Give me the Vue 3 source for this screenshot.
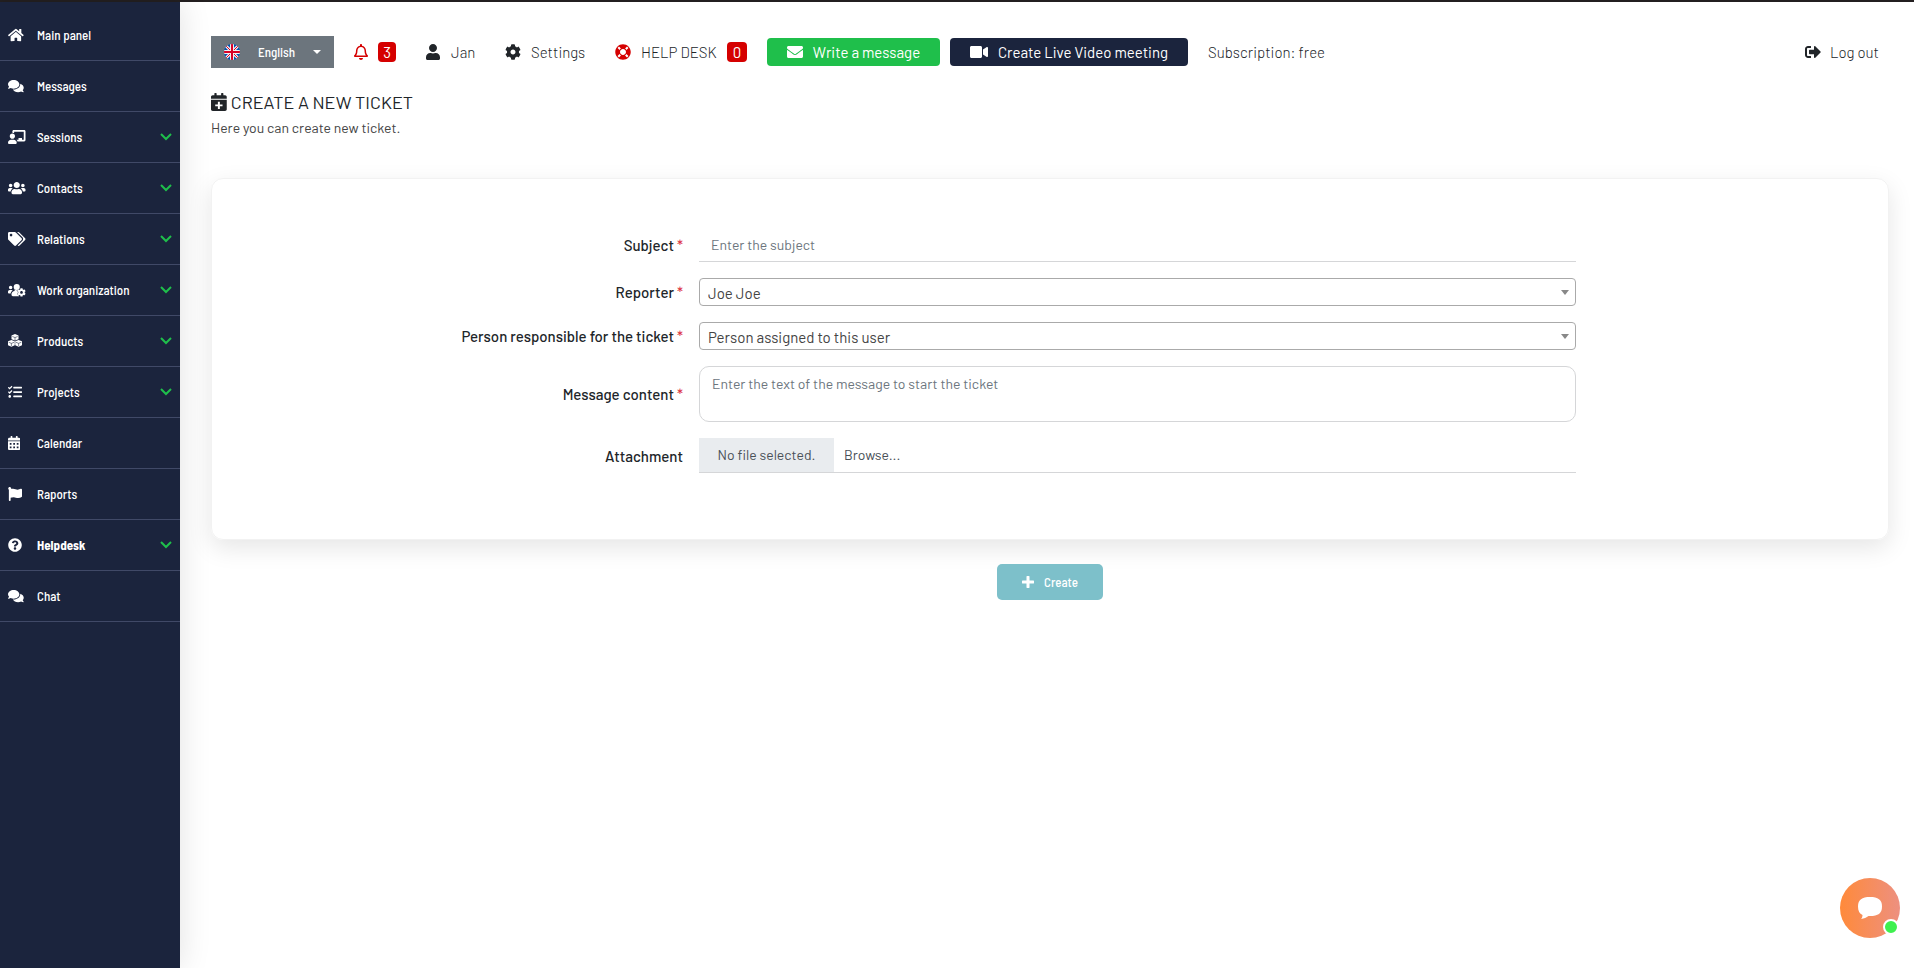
<script setup>
import { ref } from 'vue'

const icons = {
  home: { w: 576, d: 'M280.37 148.26L96 300.11V464a16 16 0 0 0 16 16l112.06-.29a16 16 0 0 0 15.92-16V368a16 16 0 0 1 16-16h64a16 16 0 0 1 16 16v95.64a16 16 0 0 0 16 16.05L464 480a16 16 0 0 0 16-16V300L295.67 148.26a12.19 12.19 0 0 0-15.3 0zM571.6 251.47L488 182.56V44.05a12 12 0 0 0-12-12h-56a12 12 0 0 0-12 12v72.61L318.47 43a48 48 0 0 0-61 0L4.34 251.47a12 12 0 0 0-1.6 16.9l25.5 31A12 12 0 0 0 45.15 301l235.22-193.74a12.19 12.19 0 0 1 15.3 0L530.9 301a12 12 0 0 0 16.9-1.6l25.5-31a12 12 0 0 0-1.7-16.93z' },
  comments: { w: 576, d: 'M416 192c0-88.4-93.1-160-208-160S0 103.6 0 192c0 34.3 14.1 65.9 38 92-13.4 30.2-35.5 54.2-35.8 54.5-2.2 2.3-2.8 5.7-1.5 8.7S4.8 352 8 352c36.6 0 66.9-12.3 88.7-25 32.2 15.7 70.3 25 111.3 25 114.9 0 208-71.6 208-160zm122 220c23.9-26 38-57.7 38-92 0-66.9-53.5-124.2-129.3-148.1.9 6.6 1.3 13.3 1.3 20.1 0 105.9-107.7 192-240 192-10.8 0-21.3-.8-31.7-1.9C207.8 439.6 281.8 480 368 480c41 0 79.1-9.2 111.3-25 21.8 12.7 52.1 25 88.7 25 3.2 0 6.1-1.9 7.3-4.8 1.3-2.9.7-6.3-1.5-8.7-.3-.3-22.4-24.2-35.8-54.5z' },
  sessions: { w: 640, d: 'M208 352c-2.39 0-4.78.35-7.06 1.09C187.98 357.3 174.35 360 160 360c-14.35 0-27.98-2.7-40.95-6.91-2.28-.74-4.66-1.09-7.05-1.09C49.94 352-.33 402.48 0 464.62.14 490.88 21.73 512 48 512h224c26.27 0 47.86-21.12 48-47.38.33-62.14-49.94-112.62-112-112.62zm-48-32c53.02 0 96-42.98 96-96s-42.98-96-96-96-96 42.98-96 96 42.98 96 96 96zM592 0H208c-26.47 0-48 22.25-48 49.59V96c23.42 0 45.1 6.78 64 17.8V64h352v288h-64v-64H384v64h-76.24c19.1 16.69 33.12 38.73 39.69 64H592c26.47 0 48-22.25 48-49.59V49.59C640 22.25 618.47 0 592 0z' },
  users: { w: 640, d: 'M96 224c35.3 0 64-28.7 64-64s-28.7-64-64-64-64 28.7-64 64 28.7 64 64 64zm448 0c35.3 0 64-28.7 64-64s-28.7-64-64-64-64 28.7-64 64 28.7 64 64 64zm32 32h-64c-17.6 0-33.5 7.1-45.1 18.6 40.3 22.1 68.9 62 75.1 109.4h66c17.7 0 32-14.3 32-32v-32c0-35.3-28.7-64-64-64zm-256 0c61.9 0 112-50.1 112-112S381.9 32 320 32 208 82.1 208 144s50.1 112 112 112zm76.8 32h-8.3c-20.8 10-43.9 16-68.5 16s-47.6-6-68.5-16h-8.3C179.6 288 128 339.6 128 403.2V432c0 26.5 21.5 48 48 48h288c26.5 0 48-21.5 48-48v-28.8c0-63.6-51.6-115.2-115.2-115.2zm-223.7-13.4C161.5 263.1 145.6 256 128 256H64c-35.3 0-64 28.7-64 64v32c0 17.7 14.3 32 32 32h65.9c6.3-47.4 34.9-87.3 75.2-109.4z' },
  tags: { w: 640, d: 'M497.941 225.941L286.059 14.059A48 48 0 0 0 252.118 0H48C21.49 0 0 21.49 0 48v204.118a48 48 0 0 0 14.059 33.941l211.882 211.882c18.744 18.745 49.136 18.746 67.882 0l204.118-204.118c18.745-18.745 18.745-49.137 0-67.882zM112 160c-26.51 0-48-21.49-48-48s21.49-48 48-48 48 21.49 48 48-21.49 48-48 48zm513.941 133.823L421.823 497.941c-18.745 18.745-49.137 18.745-67.882 0l-.36-.36L527.64 323.522c16.999-16.999 26.362-39.6 26.362-63.64s-9.362-46.641-26.362-63.64L331.397 0h48.721a48 48 0 0 1 33.941 14.059l211.882 211.882c18.745 18.745 18.745 49.137 0 67.882z' },
  work: { w: 640, d: 'M96 224a64 64 0 1 0 0-128 64 64 0 0 0 0 128zM320 256a112 112 0 1 0 0-224 112 112 0 0 0 0 224zM173.100 274.600C161.500 263.100 145.600 256 128 256H64c-35.300 0-64 28.700-64 64v32c0 17.700 14.300 32 32 32h65.900c6.300-47.400 34.900-87.300 75.200-109.400zM243 288C180 288 128 339.600 128 403.200V432c0 26.500 21.500 48 48 48h230l-12-25-38-22-14-50 24-40-22-38 18-50c-60 20-84 14-121-19z' },
  cubes: { w: 512, d: 'M256 4L384 54V188L256 242 128 188V54zM124 216L248 264V414L124 470 0 414V264zM388 216L512 264V414L388 470 264 414V264z' },
  tasks: { w: 512, d: 'M139.61 35.5a12 12 0 0 0-17 0L58.93 98.81l-22.7-22.12a12 12 0 0 0-17 0L3.53 92.41a12 12 0 0 0 0 17l47.59 47.4a12.78 12.78 0 0 0 17.61 0l15.59-15.62L156.52 69a12.09 12.09 0 0 0 .09-17zm0 159.19a12 12 0 0 0-17 0l-63.68 63.72-22.7-22.1a12 12 0 0 0-17 0L3.53 252a12 12 0 0 0 0 17L51 316.5a12.77 12.77 0 0 0 17.6 0l15.7-15.69 72.2-72.22a12 12 0 0 0 .09-16.9zM64 368c-26.49 0-48.59 21.5-48.59 48S37.53 464 64 464a48 48 0 0 0 0-96zm432 16H208a16 16 0 0 0-16 16v32a16 16 0 0 0 16 16h288a16 16 0 0 0 16-16v-32a16 16 0 0 0-16-16zm0-320H208a16 16 0 0 0-16 16v32a16 16 0 0 0 16 16h288a16 16 0 0 0 16-16V80a16 16 0 0 0-16-16zm0 160H208a16 16 0 0 0-16 16v32a16 16 0 0 0 16 16h288a16 16 0 0 0 16-16v-32a16 16 0 0 0-16-16z' },
  calendar: { w: 448, d: 'M0 464c0 26.500 21.500 48 48 48h352c26.500 0 48-21.500 48-48V192H0zM64 256h64v64H64zM192 256h64v64h-64zM320 256h64v64h-64zM64 384h64v64H64zM192 384h64v64h-64zM320 384h64v64h-64zM400 64h-48V16c0-8.800-7.200-16-16-16h-32c-8.800 0-16 7.200-16 16v48H160V16c0-8.800-7.200-16-16-16h-32c-8.800 0-16 7.200-16 16v48H48C21.500 64 0 85.500 0 112v48h448v-48c0-26.500-21.500-48-48-48z' },
  calendarPlus: { w: 448, d: 'M0 464c0 26.500 21.500 48 48 48h352c26.500 0 48-21.500 48-48V192H0zM196 248h56v76h76v56h-76v76h-56v-76h-76v-56h76zM400 64h-48V16c0-8.800-7.200-16-16-16h-32c-8.800 0-16 7.200-16 16v48H160V16c0-8.800-7.200-16-16-16h-32c-8.800 0-16 7.200-16 16v48H48C21.500 64 0 85.500 0 112v48h448v-48c0-26.500-21.500-48-48-48z' },
  flag: { w: 512, d: 'M349.565 98.783C295.978 98.783 251.721 64 184.348 64c-24.955 0-47.309 4.384-68.045 12.013a55.947 55.947 0 0 0 3.586-23.562C118.117 24.015 94.806 1.206 66.338.048 34.345-1.254 8 24.296 8 56c0 19.026 9.497 35.825 24 45.945V488c0 13.255 10.745 24 24 24h16c13.255 0 24-10.745 24-24v-94.4c28.311-12.064 63.582-22.122 114.435-22.122 53.588 0 97.844 34.783 165.217 34.783 48.169 0 86.667-16.294 122.505-40.858C506.84 359.452 512 349.571 512 339.045v-243.1c0-23.393-24.269-38.87-45.485-29.016-34.338 15.948-76.454 31.854-116.95 31.854z' },
  question: { w: 512, d: 'M504 256c0 136.997-111.043 248-248 248S8 392.997 8 256C8 119.083 119.043 8 256 8s248 111.083 248 248zM262.655 90c-54.497 0-89.255 22.957-116.549 63.758-3.536 5.286-2.353 12.415 2.715 16.258l34.699 26.31c5.205 3.947 12.621 3.008 16.665-2.122 17.864-22.658 30.113-35.797 57.303-35.797 20.429 0 45.698 13.148 45.698 32.958 0 14.976-12.363 22.667-32.534 33.976C247.128 238.528 216 254.941 216 296v4c0 6.627 5.373 12 12 12h56c6.627 0 12-5.373 12-12v-1.333c0-28.462 83.186-29.647 83.186-106.667 0-58.002-60.165-102-116.531-102zM256 338c-25.365 0-46 20.635-46 46 0 25.364 20.635 46 46 46s46-20.636 46-46c0-25.365-20.635-46-46-46z' },
  bell: { w: 448, d: 'M439.39 362.29c-19.32-20.76-55.47-51.99-55.47-154.29 0-77.7-54.48-139.9-127.94-155.16V32c0-17.67-14.32-32-31.98-32s-31.98 14.33-31.98 32v20.84C118.56 68.1 64.08 130.3 64.08 208c0 102.3-36.15 133.53-55.47 154.29-6 6.45-8.66 14.16-8.61 21.71.11 16.4 12.98 32 32.1 32h383.8c19.12 0 32-15.6 32.1-32 .05-7.55-2.61-15.27-8.61-21.71zM67.53 368c21.22-27.97 44.42-74.33 44.53-159.42 0-.2-.06-.38-.06-.58 0-61.86 50.14-112 112-112s112 50.14 112 112c0 .2-.06.38-.06.58.11 85.1 23.31 131.46 44.53 159.42H67.53zM224 512c35.32 0 63.97-28.65 63.97-64H160.03c0 35.35 28.65 64 63.97 64z' },
  user: { w: 448, d: 'M224 256c70.7 0 128-57.3 128-128S294.7 0 224 0 96 57.3 96 128s57.3 128 128 128zm89.6 32h-16.7c-22.2 10.2-46.9 16-72.9 16s-50.6-5.8-72.9-16h-16.7C60.2 288 0 348.2 0 422.4V464c0 26.5 21.5 48 48 48h352c26.5 0 48-21.5 48-48v-41.6c0-74.2-60.2-134.4-134.4-134.4z' },
  cog: { w: 512, d: 'M487.4 315.7l-42.6-24.6c4.3-23.2 4.3-47 0-70.2l42.6-24.6c4.9-2.8 7.1-8.6 5.5-14-11.1-35.6-30-67.8-54.7-94.6-3.8-4.1-10-5.1-14.8-2.3L380.8 110c-17.9-15.4-38.5-27.3-60.8-35.1V25.8c0-5.6-3.9-10.5-9.4-11.7-36.7-8.2-74.3-7.8-109.2 0-5.5 1.2-9.4 6.1-9.4 11.7V75c-22.2 7.9-42.8 19.8-60.8 35.1L88.7 85.5c-4.9-2.8-11-1.9-14.8 2.3-24.7 26.7-43.6 58.9-54.7 94.6-1.7 5.4.6 11.2 5.5 14L67.3 221c-4.3 23.2-4.3 47 0 70.2l-42.6 24.6c-4.9 2.8-7.1 8.6-5.5 14 11.1 35.6 30 67.8 54.7 94.6 3.8 4.1 10 5.1 14.8 2.3l42.6-24.6c17.9 15.4 38.5 27.3 60.8 35.1v49.2c0 5.6 3.9 10.5 9.4 11.7 36.7 8.2 74.3 7.8 109.2 0 5.5-1.2 9.4-6.1 9.4-11.7v-49.2c22.2-7.9 42.8-19.8 60.8-35.1l42.6 24.6c4.9 2.8 11 1.9 14.8-2.3 24.7-26.7 43.6-58.9 54.7-94.6 1.5-5.5-.7-11.3-5.6-14.1zM256 336c-44.1 0-80-35.9-80-80s35.9-80 80-80 80 35.9 80 80-35.9 80-80 80z' },
  lifeRing: { w: 512, d: 'M256 8C119.033 8 8 119.033 8 256s111.033 248 248 248 248-111.033 248-248S392.967 8 256 8zm173.696 119.559l-63.399 63.399c-10.987-18.559-26.67-34.252-45.255-45.255l63.399-63.399a218.396 218.396 0 0 1 45.255 45.255zM256 352c-53.019 0-96-42.981-96-96s42.981-96 96-96 96 42.981 96 96-42.981 96-96 96zM127.559 82.304l63.399 63.399c-18.559 10.987-34.252 26.67-45.255 45.255l-63.399-63.399a218.372 218.372 0 0 1 45.255-45.255zM82.304 384.441l63.399-63.399c10.987 18.559 26.67 34.252 45.255 45.255l-63.399 63.399a218.396 218.396 0 0 1-45.255-45.255zm302.137 45.255l-63.399-63.399c18.559-10.987 34.252-26.67 45.255-45.255l63.399 63.399a218.403 218.403 0 0 1-45.255 45.255z' },
  envelope: { w: 512, d: 'M502.3 190.8c3.9-3.1 9.7-.2 9.7 4.7V400c0 26.5-21.5 48-48 48H48c-26.5 0-48-21.5-48-48V195.6c0-5 5.7-7.8 9.7-4.7 22.4 17.4 52.1 39.5 154.1 113.6 21.1 15.4 56.7 47.8 92.2 47.6 35.7.3 72-32.8 92.3-47.6 102-74.1 131.6-96.3 154-113.7zM256 320c23.2.4 56.6-29.2 73.4-41.4 132.7-96.3 142.8-104.7 173.4-128.7 5.8-4.5 9.2-11.5 9.2-18.9v-19c0-26.5-21.5-48-48-48H48c-26.5 0-48 21.5-48 48v19c0 7.4 3.4 14.3 9.2 18.9 30.6 23.9 40.7 32.4 173.4 128.7 16.8 12.2 50.2 41.8 73.4 41.4z' },
  video: { w: 576, d: 'M336.2 64H47.8C21.4 64 0 85.4 0 111.8v288.4C0 426.6 21.4 448 47.8 448h288.4c26.4 0 47.8-21.4 47.8-47.8V111.8c0-26.4-21.4-47.8-47.8-47.8zm189.4 37.7L416 177.3v157.4l109.6 75.5c21.2 14.6 50.4-.3 50.4-25.8V127.5c0-25.4-29.1-40.4-50.4-25.8z' },
  signOut: { w: 512, d: 'M497 273L329 441c-15 15-41 4.5-41-17v-96H152c-13.3 0-24-10.7-24-24v-96c0-13.3 10.7-24 24-24h136V88c0-21.4 25.9-32 41-17l168 168c9.3 9.4 9.3 24.6 0 34zM192 436v-40c0-6.6-5.4-12-12-12H96c-17.7 0-32-14.3-32-32V160c0-17.7 14.3-32 32-32h84c6.6 0 12-5.4 12-12V76c0-6.6-5.4-12-12-12H96c-53 0-96 43-96 96v192c0 53 43 96 96 96h84c6.6 0 12-5.4 12-12z' },
}

const box = (name) => `0 0 ${icons[name].w} 512`

const nav = [
  { label: 'Main panel', icon: 'home' },
  { label: 'Messages', icon: 'comments' },
  { label: 'Sessions', icon: 'sessions', open: true },
  { label: 'Contacts', icon: 'users', open: true },
  { label: 'Relations', icon: 'tags', open: true },
  { label: 'Work organization', icon: 'work', open: true },
  { label: 'Products', icon: 'cubes', open: true },
  { label: 'Projects', icon: 'tasks', open: true },
  { label: 'Calendar', icon: 'calendar' },
  { label: 'Raports', icon: 'flag' },
  { label: 'Helpdesk', icon: 'question', open: true, active: true },
  { label: 'Chat', icon: 'comments' },
]

const subject = ref('')
const reporter = ref('Joe Joe')
const responsible = ref('Person assigned to this user')
const message = ref('')
</script>

<template>
  <div class="app">
    <nav class="sidebar" aria-label="Main">
      <a v-for="item in nav" :key="item.label" href="#" class="nav-item" :class="{ active: item.active }">
        <span class="nav-icon">
          <svg class="icon" :viewBox="box(item.icon)" aria-hidden="true">
            <path :d="icons[item.icon].d" fill-rule="evenodd" />
            <path v-if="item.icon === 'cubes'" class="cube-lines" d="M158 92L256 130 354 92M256 130V220M24 302L124 342 224 302M124 342V440M288 302L388 342 488 302M388 342V440" />
            <g v-if="item.icon === 'work'" transform="translate(335 185) scale(.62)">
              <path :d="icons.cog.d" fill-rule="evenodd" />
            </g>
          </svg>
        </span>
        <span class="nav-label">{{ item.label }}</span>
        <svg v-if="item.open" class="chevron" viewBox="0 0 12 8" aria-hidden="true"><path d="M1 1L6 6L11 1" /></svg>
      </a>
    </nav>

    <main class="main">
      <header class="topbar">
        <button type="button" class="language">
          <svg class="flag" viewBox="0 0 16 16" aria-hidden="true">
            <clipPath id="round"><circle cx="8" cy="8" r="8" /></clipPath>
            <g clip-path="url(#round)">
              <rect width="16" height="16" fill="#0052b4" />
              <path d="M0 0L16 16M16 0L0 16" stroke="#f0f0f0" stroke-width="3" />
              <path d="M0 0L16 16M16 0L0 16" stroke="#d80027" stroke-width="1" />
              <path d="M8 0V16M0 8H16" stroke="#f0f0f0" stroke-width="4" />
              <path d="M8 0V16M0 8H16" stroke="#d80027" stroke-width="2" />
            </g>
          </svg>
          <span>English</span>
          <svg class="caret" viewBox="0 0 8 4" aria-hidden="true"><path d="M0 0H8L4 4Z" /></svg>
        </button>
        <a href="#" class="top-link bell" aria-label="Notifications">
          <svg class="icon" :viewBox="box('bell')" aria-hidden="true"><path :d="icons.bell.d" fill-rule="evenodd" /></svg>
          <span class="badge">3</span>
        </a>
        <a href="#" class="top-link user">
          <svg class="icon" :viewBox="box('user')" aria-hidden="true"><path :d="icons.user.d" /></svg>
          <span>Jan</span>
        </a>
        <a href="#" class="top-link settings">
          <svg class="icon" :viewBox="box('cog')" aria-hidden="true"><path :d="icons.cog.d" fill-rule="evenodd" /></svg>
          <span>Settings</span>
        </a>
        <a href="#" class="top-link help">
          <svg class="icon red" :viewBox="box('lifeRing')" aria-hidden="true"><path :d="icons.lifeRing.d" fill-rule="evenodd" /></svg>
          <span>HELP DESK</span>
          <span class="badge">0</span>
        </a>
        <div class="actions">
          <button type="button" class="action green">
            <svg class="icon" :viewBox="box('envelope')" aria-hidden="true"><path :d="icons.envelope.d" /></svg>
            <span>Write a message</span>
          </button>
          <button type="button" class="action navy">
            <svg class="icon" :viewBox="box('video')" aria-hidden="true"><path :d="icons.video.d" /></svg>
            <span>Create Live Video meeting</span>
          </button>
        </div>
        <span class="subscription">Subscription: free</span>
        <a href="#" class="top-link logout">
          <svg class="icon" :viewBox="box('signOut')" aria-hidden="true"><path :d="icons.signOut.d" /></svg>
          <span>Log out</span>
        </a>
      </header>

      <div class="heading">
        <h1>
          <svg class="icon" :viewBox="box('calendarPlus')" aria-hidden="true"><path :d="icons.calendarPlus.d" fill-rule="evenodd" /></svg>
          <span>CREATE A NEW TICKET</span>
        </h1>
        <p>Here you can create new ticket.</p>
      </div>

      <form @submit.prevent>
        <div class="card">
          <div class="row">
            <label for="subject">Subject <b>*</b></label>
            <input id="subject" v-model="subject" class="line-input" type="text" placeholder="Enter the subject">
          </div>
          <div class="row">
            <label for="reporter">Reporter <b>*</b></label>
            <div class="select">
              <select id="reporter" v-model="reporter"><option>Joe Joe</option></select>
              <svg viewBox="0 0 8 5" aria-hidden="true"><path d="M0 0H8L4 5Z" /></svg>
            </div>
          </div>
          <div class="row">
            <label for="responsible">Person responsible for the ticket <b>*</b></label>
            <div class="select">
              <select id="responsible" v-model="responsible"><option>Person assigned to this user</option></select>
              <svg viewBox="0 0 8 5" aria-hidden="true"><path d="M0 0H8L4 5Z" /></svg>
            </div>
          </div>
          <div class="row">
            <label for="message">Message content <b>*</b></label>
            <textarea id="message" v-model="message" placeholder="Enter the text of the message to start the ticket"></textarea>
          </div>
          <div class="row">
            <label for="attachment">Attachment</label>
            <div class="file">
              <input id="attachment" type="file">
              <span class="file-name">No file selected.</span>
              <span class="file-browse">Browse...</span>
            </div>
          </div>
        </div>
        <button type="submit" class="create">
          <svg viewBox="0 0 12 12" aria-hidden="true"><path d="M6 1V11M1 6H11" /></svg>
          <span>Create</span>
        </button>
      </form>
    </main>

    <button type="button" class="chat" aria-label="Open chat">
      <svg viewBox="0 0 24 22" aria-hidden="true"><path d="M12 0C20 0 24 2.500 24 9.500S20 19 12 19H10.500C8.500 20.500 6 21.500 3 22 4 21 4.500 19.500 4.500 18 1.500 16.500 0 14 0 9.500 0 2.500 4 0 12 0Z" /></svg>
      <span class="online"></span>
    </button>
  </div>
</template>

<style>
body {
  margin: 0;
  background: #fff;
}
</style>

<style scoped>
* {
  box-sizing: border-box;
}
.app {
  display: flex;
  min-height: 100vh;
  border-top: 2px solid #231f20;
  font-family: Barlow, Roboto, "Liberation Sans", sans-serif;
  font-size: 15px;
  color: #212529;
}
button, input, select, textarea {
  font: inherit;
  color: inherit;
}
button {
  border: 0;
  cursor: pointer;
}
a {
  color: inherit;
  text-decoration: none;
}
.icon {
  display: block;
  height: 16px;
  fill: currentColor;
  flex: none;
}
.sidebar {
  flex: none;
  width: 180px;
  padding-top: 8px;
  background: #1b243d;
  box-shadow: 0 0 30px rgba(0, 0, 0, .12);
  color: #fff;
}
.nav-item {
  display: flex;
  align-items: center;
  height: 51px;
  padding: 0 8px;
  border-bottom: 1px solid #404967;
  font-family: "Barlow Semi Condensed", Barlow, Roboto, sans-serif;
  font-size: 13px;
  font-weight: 500;
}
.nav-item.active {
  font-weight: 700;
}
.nav-icon {
  width: 29px;
}
.nav-icon .icon {
  height: 14px;
}
.nav-label {
  flex: 1;
}
.cube-lines {
  fill: none;
  stroke: #1b243d;
  stroke-width: 20;
}
.chevron {
  width: 12px;
  height: 8px;
  fill: none;
  stroke: #1fbf4b;
  stroke-width: 2;
}
.main {
  flex: 1;
  min-width: 0;
  padding: 34px 25px 40px 31px;
}
.topbar {
  display: flex;
  align-items: center;
  height: 32px;
  font-weight: 300;
  white-space: nowrap;
}
.top-link {
  display: flex;
  align-items: center;
  gap: 10px;
}
.language {
  display: flex;
  align-items: center;
  justify-content: space-between;
  width: 123px;
  height: 32px;
  padding: 0 13px;
  background: #6c757d;
  color: #fff;
  font-family: "Barlow Semi Condensed", Barlow, Roboto, sans-serif;
  font-size: 13px;
  font-weight: 500;
}
.flag {
  width: 16px;
  height: 16px;
}
.caret {
  width: 8px;
  height: 4px;
  fill: #fff;
}
.bell {
  width: 72px;
  margin-left: 20px;
  color: #d50000;
}
.user {
  gap: 11px;
  width: 79px;
}
.settings {
  width: 110px;
}
.help {
  width: 152px;
}
.red {
  color: #d50000;
}
.badge {
  display: flex;
  align-items: center;
  justify-content: center;
  min-width: 18px;
  height: 20px;
  padding: 0 5px;
  border-radius: 4px;
  background: #d50000;
  color: #fff;
  font-weight: 400;
}
.help .badge {
  padding: 0 6px;
}
.actions {
  display: flex;
  gap: 10px;
}
.action {
  display: flex;
  align-items: center;
  justify-content: center;
  gap: 10px;
  height: 28px;
  border-radius: 4px;
  color: #fff;
  font-weight: 400;
}
.green {
  width: 173px;
  background: #1fbf4b;
}
.navy {
  width: 238px;
  background: #1b243d;
}
.subscription {
  margin-left: 20px;
}
.logout {
  gap: 9px;
  margin-left: auto;
  padding-right: 10px;
}
.heading h1 {
  display: flex;
  align-items: center;
  gap: 4px;
  margin: 23px 0 0;
  font-size: 18px;
  font-weight: 400;
  line-height: 22px;
}
.heading .icon {
  height: 18px;
}
.heading p {
  margin: 5px 0 0;
  color: #444;
  font-size: 14px;
  line-height: 20px;
}
.card {
  display: flex;
  flex-direction: column;
  gap: 16px;
  margin-top: 40px;
  padding: 48px 0 66px;
  border: 1px solid #f2f2f2;
  border-radius: 12px;
  box-shadow: 0 8px 24px rgba(0, 0, 0, .1);
}
.row {
  display: grid;
  grid-template-columns: 471fr 877fr 296fr;
  column-gap: 16px;
  align-items: center;
}
.row label {
  text-align: right;
  font-weight: 500;
}
.row b {
  color: #dc3545;
  font-weight: 500;
}
.line-input {
  width: 100%;
  height: 35px;
  padding: 0 12px;
  border: 0;
  border-bottom: 1px solid #d5d6d8;
  background: transparent;
  font-size: 14px;
}
.line-input::placeholder, textarea::placeholder {
  color: #6c757d;
  opacity: 1;
}
.select {
  position: relative;
}
.select select {
  display: block;
  width: 100%;
  height: 28px;
  padding: 2px 28px 0 8px;
  border: 1px solid #aaa;
  border-radius: 4px;
  appearance: none;
  background: #fff;
  color: #444;
}
.select svg {
  position: absolute;
  top: 12px;
  right: 7px;
  width: 8px;
  height: 5px;
  fill: #888;
  pointer-events: none;
}
textarea {
  display: block;
  width: 100%;
  height: 56px;
  padding: 7px 12px;
  border: 1px solid #d5d6d8;
  border-radius: 10px;
  font-size: 14px;
  line-height: 20px;
  resize: none;
}
.file {
  position: relative;
  display: flex;
  height: 35px;
  border-bottom: 1px solid #d5d6d8;
  color: #495057;
  font-size: 14px;
  line-height: 34px;
}
.file input {
  position: absolute;
  inset: 0;
  width: 100%;
  opacity: 0;
}
.file-name {
  width: 135px;
  background: #e9ecef;
  text-align: center;
}
.file-browse {
  padding-left: 10px;
}
.create {
  display: flex;
  align-items: center;
  justify-content: center;
  gap: 10px;
  width: 106px;
  height: 36px;
  margin: 24px auto 0;
  border-radius: 5px;
  background: #7dc0ca;
  color: #fff;
  font-family: "Barlow Semi Condensed", Barlow, Roboto, sans-serif;
  font-size: 13px;
  font-weight: 500;
}
.create svg {
  width: 12px;
  height: 12px;
  fill: none;
  stroke: #fff;
  stroke-width: 3;
  stroke-linecap: round;
}
.chat {
  position: fixed;
  right: 14px;
  bottom: 30px;
  display: flex;
  align-items: center;
  justify-content: center;
  width: 60px;
  height: 60px;
  padding: 0;
  border-radius: 50%;
  background: linear-gradient(90deg, #ff8a3a, #ed9080);
}
.chat svg {
  width: 24px;
  height: 22px;
  fill: #fff;
}
.online {
  position: absolute;
  right: 1px;
  bottom: 3px;
  width: 16px;
  height: 16px;
  border: 2px solid #fff;
  border-radius: 50%;
  background: #3ff04f;
}
</style>
